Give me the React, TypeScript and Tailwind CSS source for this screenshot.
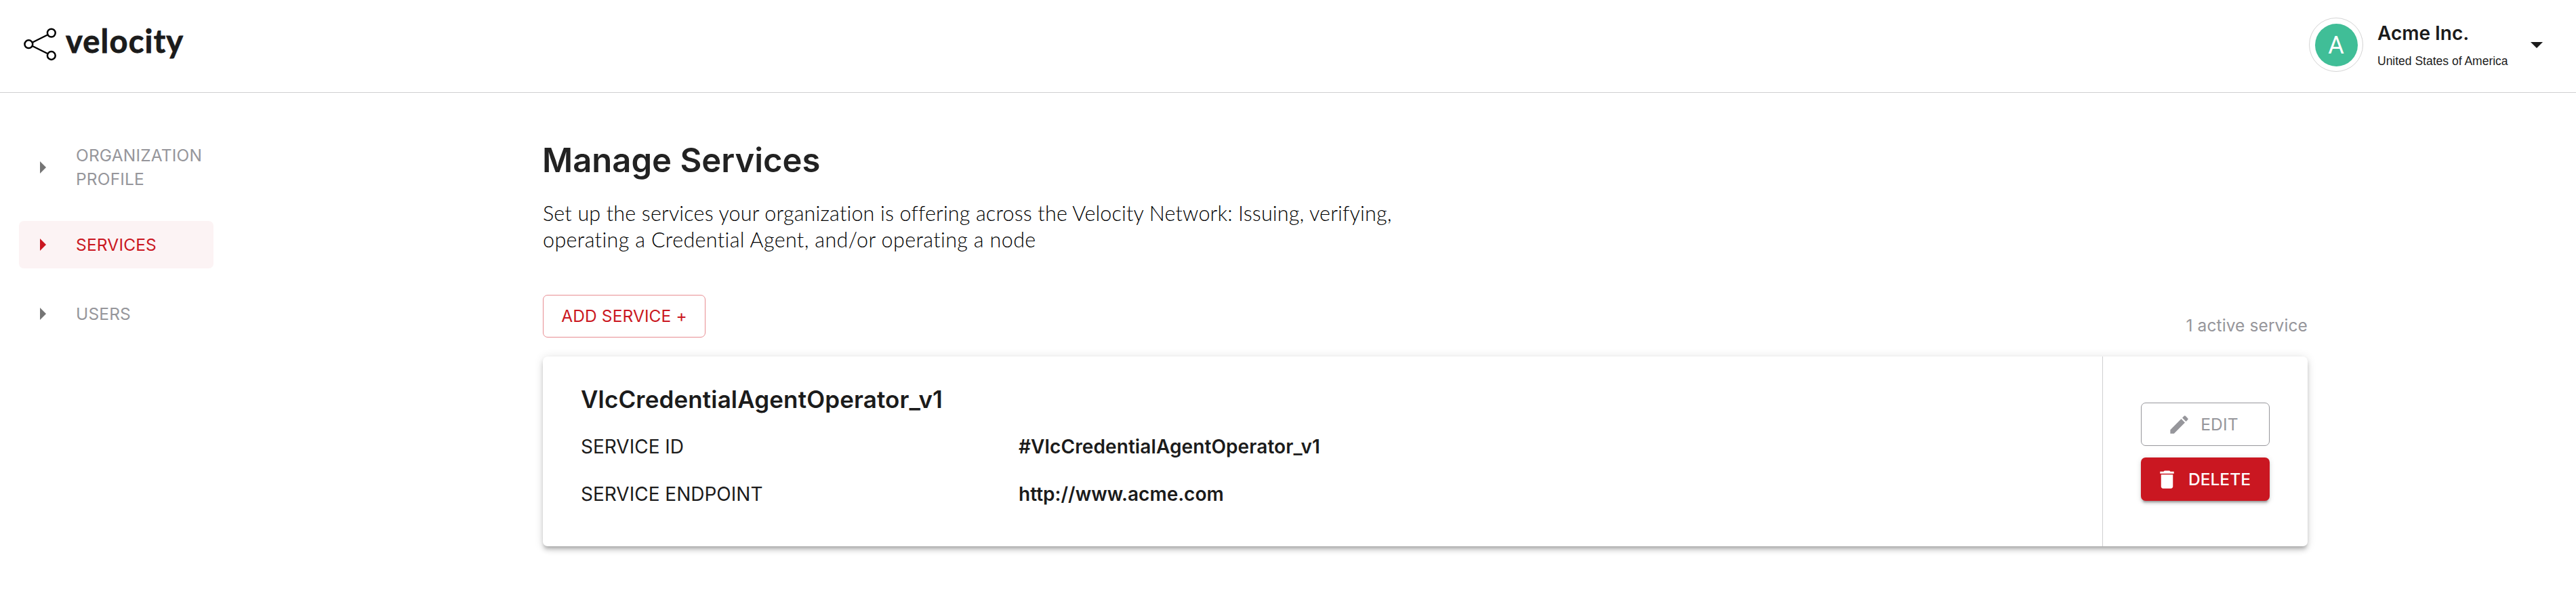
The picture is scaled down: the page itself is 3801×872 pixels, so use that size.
function Logo() {
  return (
    <div className="flex h-full items-start pl-[35px] pt-[40px]">
      <svg width="50" height="50" viewBox="0 0 50 50" fill="none" stroke="#000" strokeWidth="2.5">
        <path d="M13 22.5 35 11.5M13 28 35 39" strokeWidth="2.4" />
        <circle cx="7.3" cy="25.2" r="5.9" />
        <circle cx="40.8" cy="8.6" r="5.9" />
        <circle cx="40.8" cy="42" r="5.9" />
      </svg>
      <span className="ml-3 mt-[-10px] font-['Lato',sans-serif] text-[47px] font-bold leading-[60px] tracking-[1.2px] text-[#1b1b1b] [-webkit-text-stroke:0.8px_#1b1b1b]">
        velocity
      </span>
    </div>
  );
}

function Header() {
  return (
    <header className="flex h-[137px] justify-between border-b border-[#cfcfd1]">
      <Logo />
      <div className="flex pr-[49px]">
        <div className="mt-[26px] flex h-20 w-20 items-center justify-center rounded-full border border-[#d4d4d4]">
          <div className="flex h-[63px] w-[63px] items-center justify-center rounded-full bg-[#40be97] pt-[2px] font-['Roboto',sans-serif] text-[36px] leading-none text-white">
            A
          </div>
        </div>
        <div className="ml-[21px] w-[226px] pt-[28px] text-[#1b1b1b]">
          <div className="text-[28px] font-semibold leading-[42px]">Acme Inc.</div>
          <div className="mt-[7px] whitespace-nowrap font-['Liberation_Sans',Arial,sans-serif] text-[17.5px] leading-[26px]">
            United States of America
          </div>
        </div>
        <svg className="mt-[62px]" width="18" height="9" viewBox="0 0 18 9">
          <path d="M0 0h18L9 9z" fill="#1b1b1b" />
        </svg>
      </div>
    </header>
  );
}

function NavItem({ label, className, arrow = "#757575" }: { label: string; className: string; arrow?: string }) {
  return (
    <a className={`flex w-[287px] items-center rounded-[7px] pl-[31px] text-[24.5px] leading-[35px] tracking-[0.17px] ${className}`}>
      <svg className="shrink-0" width="9" height="18" viewBox="0 0 9 18">
        <path d="M0 0v18l9-9z" fill={arrow} />
      </svg>
      <span className="ml-[44px]">{label}</span>
    </a>
  );
}

function Sidebar() {
  return (
    <nav className="w-[801px] shrink-0 pl-7 pt-[59px]">
      <NavItem label="ORGANIZATION PROFILE" className="h-[102px] text-[#96969b]" />
      <NavItem label="SERVICES" className="mt-7 h-[70px] bg-[#fcf3f4] text-[#ca1721]" arrow="#ca1721" />
      <NavItem label="USERS" className="mt-8 h-[70px] text-[#96969b]" />
    </nav>
  );
}

function ServiceCard() {
  return (
    <section className="mt-7 flex h-[280px] rounded-[7px] bg-white shadow-[0_5.25px_5.25px_-3.5px_rgba(0,0,0,0.2),0_5.25px_7px_0_rgba(0,0,0,0.14),0_1.75px_14px_0_rgba(0,0,0,0.12)]">
      <div className="flex-1 pl-14 pt-[38px] text-[28px] leading-[42px] text-[#1b1b1b]">
        <h2 className="text-[35px] font-semibold leading-[50px] tracking-[0.14px]">VlcCredentialAgentOperator_v1</h2>
        <dl className="mt-6 grid grid-cols-[646px_1fr] gap-y-7">
          <dt>SERVICE ID</dt>
          <dd className="font-semibold tracking-[0.1px]">#VlcCredentialAgentOperator_v1</dd>
          <dt>SERVICE ENDPOINT</dt>
          <dd className="font-semibold">http://www.acme.com</dd>
        </dl>
      </div>
      <div className="flex w-[303px] flex-col gap-[17px] border-l border-[#cfcfd1] px-14 pt-[68px] text-[24.5px]">
        <button className="flex h-16 items-center justify-center gap-[14px] rounded-[7px] border border-[#96969b] pr-[7px] tracking-[0.2px] text-[#96969b]">
          <svg width="35" height="35" viewBox="0 0 24 24" fill="currentColor">
            <path d="M3 17.25V21h3.75L17.81 9.94l-3.75-3.75L3 17.25zM20.71 7.04c.39-.39.39-1.02 0-1.41l-2.34-2.34a.9959.9959 0 0 0-1.41 0l-1.83 1.83 3.75 3.75 1.83-1.83z" />
          </svg>
          <span>EDIT</span>
        </button>
        <button className="flex h-16 items-center justify-center gap-[14px] rounded-[7px] bg-[#ca1721] pr-[7px] font-medium text-white shadow-[0_5.25px_1.75px_-3.5px_rgba(0,0,0,0.2),0_3.5px_3.5px_0_rgba(0,0,0,0.14),0_1.75px_8.75px_0_rgba(0,0,0,0.12)]">
          <svg width="35" height="35" viewBox="0 0 24 24" fill="currentColor">
            <path d="M6 19c0 1.1.9 2 2 2h8c1.1 0 2-.9 2-2V7H6v12zM19 4h-3.5l-1-1h-5l-1 1H5v2h14V4z" />
          </svg>
          <span>DELETE</span>
        </button>
      </div>
    </section>
  );
}

export default function App() {
  return (
    <div className="min-h-[872px] bg-white font-['Inter',sans-serif]">
      <Header />
      <div className="flex">
        <Sidebar />
        <main className="w-[2604px] pt-[70px]">
          <h1 className="ml-[-1px] text-[49px] font-semibold leading-[60px] text-[#222]">Manage Services</h1>
          <p className="mt-[28px] whitespace-nowrap font-['Lato',sans-serif] text-[30.5px] font-light leading-[39px] text-black">
            <span className="tracking-[0.16px]">Set up the services your organization is offering across the Velocity Network: Issuing, verifying,</span>
            <br />
            <span className="tracking-[0.36px]">operating a Credential Agent, and/or operating a node</span>
          </p>
          <div className="mt-[62px] flex items-end justify-between">
            <button className="h-[63px] w-[240px] rounded-[7px] border border-[#e88d92] text-[24.5px] tracking-[0.1px] text-[#ca1721]">
              ADD SERVICE +
            </button>
            <span className="text-[24.5px] leading-[35px] tracking-[0.1px] text-[#96969b]">1 active service</span>
          </div>
          <ServiceCard />
        </main>
      </div>
    </div>
  );
}
